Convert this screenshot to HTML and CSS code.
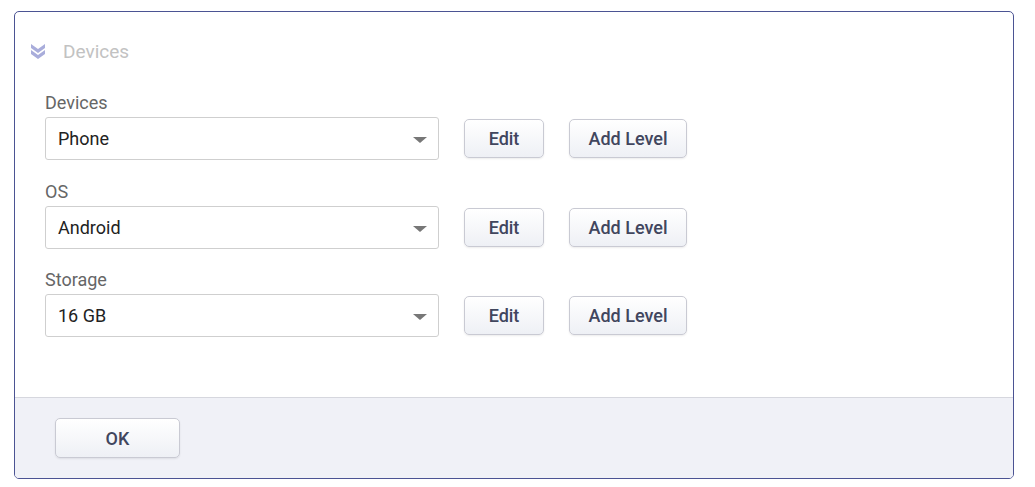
FILE: index.html
```html
<!DOCTYPE html>
<html lang="en">
<head>
  <meta charset="UTF-8" />
  <title>Devices</title>
  <link rel="stylesheet" href="styles.css">
</head>
<body>
  <div class="panel">
    <div class="panel-head">
      <svg class="chevrons" width="16" height="16" viewBox="0 0 16 16">
        <path d="M1 1 L8 6 L15 1 L15 5 L8 10 L1 5 Z" fill="#a9addb"/>
        <path d="M1 7 L8 12 L15 7 L15 11 L8 16 L1 11 Z" fill="#a9addb"/>
      </svg>
      <span class="head-title">Devices</span>
    </div>

    <div class="panel-body">
      <div class="field">
        <label>Devices</label>
        <div class="field-row">
          <div class="select">Phone<span class="caret"></span></div>
          <button class="btn btn-edit">Edit</button>
          <button class="btn btn-add">Add Level</button>
        </div>
      </div>
      <div class="field">
        <label>OS</label>
        <div class="field-row">
          <div class="select">Android<span class="caret"></span></div>
          <button class="btn btn-edit">Edit</button>
          <button class="btn btn-add">Add Level</button>
        </div>
      </div>
      <div class="field">
        <label>Storage</label>
        <div class="field-row">
          <div class="select">16 GB<span class="caret"></span></div>
          <button class="btn btn-edit">Edit</button>
          <button class="btn btn-add">Add Level</button>
        </div>
      </div>
    </div>

    <div class="panel-foot">
      <button class="btn btn-ok">OK</button>
    </div>
  </div>
</body>
</html>
```

FILE: styles.css
```css
/* page */
body {
  margin: 0;
  background: #fff;
  font-family: Roboto, "Liberation Sans", sans-serif;
}

/* outer dialog panel */
.panel {
  margin: 11px 0 0 14px;
  width: 998px;
  height: 466px;
  border: 1px solid #4b5393;
  border-radius: 5px;
  display: flex;
  flex-direction: column;
  overflow: hidden;
}

.panel-head {
  display: flex;
  align-items: center;
  gap: 17px;
  padding: 29px 15px 0 15px;
  height: 20px;
}
.chevrons {
  display: block;
}
.head-title {
  font-size: 19px;
  color: #c2c2c2;
}

/* form rows */
.panel-body {
  flex: 1;
  padding: 31px 0 0 30px;
}
.field {
  margin-bottom: 20.5px;
}
.field label {
  display: block;
  font-size: 18px;
  color: #666;
  line-height: 21px;
  margin-bottom: 4px;
}
.field-row {
  display: flex;
  align-items: center;
  gap: 25px;
}

.select {
  position: relative;
  box-sizing: border-box;
  width: 394px;
  height: 43px;
  border: 1px solid #cfcfcf;
  border-radius: 3px;
  padding: 0 12px;
  line-height: 41px;
  font-size: 18px;
  color: #222;
}
.caret {
  position: absolute;
  right: 11px;
  top: 19px;
  border-left: 7px solid transparent;
  border-right: 7px solid transparent;
  border-top: 6px solid #777;
}

/* buttons */
.btn {
  box-sizing: border-box;
  height: 39px;
  border: 1px solid #c9cad3;
  border-radius: 5px;
  background: linear-gradient(#ffffff, #eef0f5);
  box-shadow: 0 1px 2px rgba(0, 0, 0, 0.08);
  font-family: Roboto, "Liberation Sans", sans-serif;
  font-size: 18px;
  font-weight: 500;
  color: #41465e;
  padding: 0;
  cursor: pointer;
}
.btn-edit {
  width: 80px;
}
.btn-add {
  width: 118px;
}
.btn-ok {
  width: 125px;
  height: 40px;
}

/* footer strip */
.panel-foot {
  height: 81px;
  border-top: 1px solid #d6d7de;
  background: #f0f1f7;
  padding: 20px 0 0 40px;
  box-sizing: border-box;
}
```
